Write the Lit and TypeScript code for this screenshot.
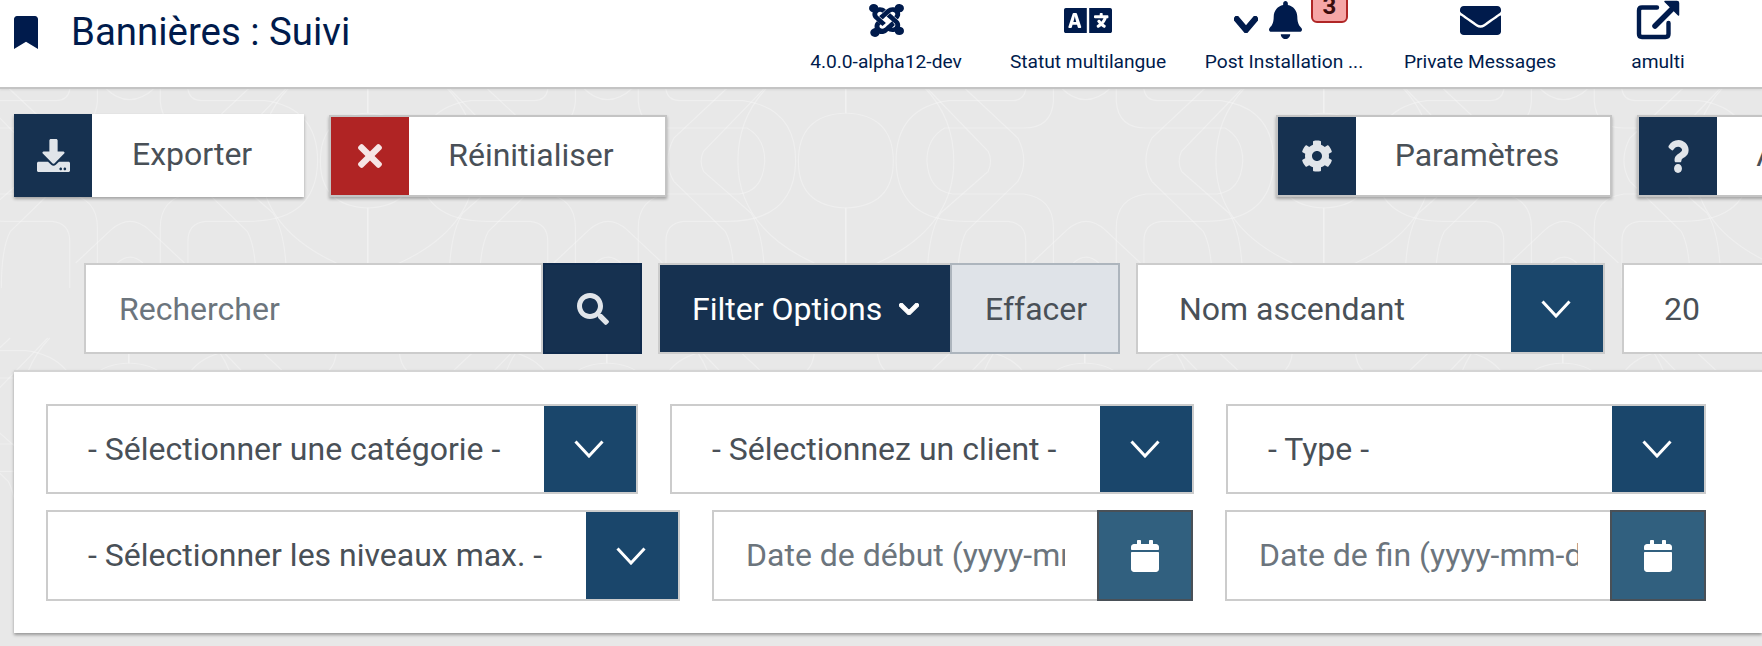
import { LitElement, html, css, svg } from "lit";
import { customElement } from "lit/decorators.js";

const P = {
  bookmark: "M0 512V48C0 21.49 21.49 0 48 0h288c26.51 0 48 21.49 48 48v464L192 400 0 512z",
  bell: "M224 512c35.32 0 63.97-28.65 63.97-64H160.03c0 35.35 28.65 64 63.97 64zm215.39-149.71c-19.32-20.76-55.47-51.99-55.47-154.29 0-77.7-54.48-139.9-127.94-155.16V32c0-17.67-14.32-32-31.98-32s-31.98 14.33-31.98 32v20.84C118.56 68.1 64.08 130.3 64.08 208c0 102.3-36.15 133.53-55.47 154.29-6 6.45-8.66 14.16-8.61 21.71.11 16.4 12.98 32 32.1 32h383.8c19.12 0 32-15.6 32.1-32 .05-7.55-2.61-15.27-8.61-21.71z",
  search: "M505 442.7L405.3 343c-4.5-4.5-10.6-7-17-7H372c27.6-35.3 44-79.7 44-128C416 93.1 322.9 0 208 0S0 93.1 0 208s93.1 208 208 208c48.3 0 92.7-16.4 128-44v16.3c0 6.4 2.5 12.5 7 17l99.7 99.7c9.4 9.4 24.6 9.4 33.9 0l28.3-28.3c9.4-9.4 9.4-24.6.1-34zM208 336c-70.7 0-128-57.2-128-128 0-70.7 57.2-128 128-128 70.7 0 128 57.2 128 128 0 70.7-57.2 128-128 128z",
  chevron: "M207.029 381.476L12.686 187.132c-9.373-9.373-9.373-24.569 0-33.941l22.667-22.667c9.357-9.357 24.522-9.375 33.901-.04L224 284.505l154.745-154.021c9.379-9.335 24.544-9.317 33.901.04l22.667 22.667c9.373 9.373 9.373 24.569 0 33.941L240.971 381.476c-9.373 9.372-24.569 9.372-33.942 0z",
  times: "M242.72 256l100.07-100.07c12.28-12.28 12.28-32.19 0-44.48l-22.24-22.24c-12.28-12.28-32.19-12.28-44.48 0L176 189.28 75.93 89.21c-12.28-12.28-32.19-12.28-44.48 0L9.21 111.45c-12.28 12.28-12.28 32.19 0 44.48L109.28 256 9.21 356.07c-12.28 12.28-12.28 32.19 0 44.48l22.24 22.24c12.28 12.28 32.2 12.28 44.48 0L176 322.72l100.07 100.07c12.28 12.28 32.2 12.28 44.48 0l22.24-22.24c12.28-12.28 12.28-32.19 0-44.48L242.72 256z",
  cog: "M487.4 315.7l-42.6-24.6c4.3-23.2 4.3-47 0-70.2l42.6-24.6c4.9-2.8 7.1-8.6 5.5-14-11.1-35.6-30-67.8-54.7-94.6-3.8-4.1-10-5.1-14.8-2.3L380.8 110c-17.9-15.4-38.5-27.3-60.8-35.1V25.8c0-5.6-3.9-10.5-9.4-11.7-36.7-8.2-74.3-7.8-109.2 0-5.5 1.2-9.4 6.1-9.4 11.7V75c-22.2 7.9-42.8 19.8-60.8 35.1L88.7 85.5c-4.9-2.8-11-1.9-14.8 2.3-24.7 26.7-43.6 58.9-54.7 94.6-1.7 5.4.6 11.2 5.5 14L67.3 221c-4.3 23.2-4.3 47 0 70.2l-42.6 24.6c-4.9 2.8-7.1 8.6-5.5 14 11.1 35.6 30 67.8 54.7 94.6 3.8 4.1 10 5.1 14.8 2.3l42.6-24.6c17.9 15.4 38.5 27.3 60.8 35.1v49.2c0 5.6 3.9 10.5 9.4 11.7 36.7 8.2 74.3 7.8 109.2 0 5.5-1.2 9.4-6.1 9.4-11.7v-49.2c22.2-7.9 42.8-19.8 60.8-35.1l42.6 24.6c4.9 2.8 11 1.9 14.8-2.3 24.7-26.7 43.6-58.9 54.7-94.6 1.5-5.5-.7-11.3-5.6-14.1zM256 336c-44.1 0-80-35.9-80-80s35.9-80 80-80 80 35.9 80 80-35.9 80-80 80z",
  question: "M202.021 0C122.202 0 70.503 32.703 29.914 91.026c-7.363 10.58-5.093 25.086 5.178 32.874l43.138 32.709c10.373 7.865 25.132 6.026 33.253-4.148 25.049-31.381 43.63-49.449 82.757-49.449 30.764 0 68.816 19.799 68.816 49.631 0 22.552-18.617 34.134-48.993 51.164-35.423 19.86-82.299 44.576-82.299 106.405V320c0 13.255 10.745 24 24 24h72.471c13.255 0 24-10.745 24-24v-5.773c0-42.86 125.268-44.645 125.268-160.627C377.504 66.256 286.902 0 202.021 0zM192 373.459c-38.196 0-69.271 31.075-69.271 69.271 0 38.195 31.075 69.27 69.271 69.27s69.271-31.075 69.271-69.271-31.075-69.27-69.271-69.27z",
  download: "M216 0h80c13.3 0 24 10.7 24 24v168h87.7c17.8 0 26.7 21.5 14.1 34.1L269.7 378.3c-7.5 7.5-19.8 7.5-27.3 0L90.1 226.1c-12.6-12.6-3.7-34.1 14.1-34.1H192V24c0-13.3 10.7-24 24-24zm296 376v112c0 13.3-10.7 24-24 24H24c-13.3 0-24-10.7-24-24V376c0-13.3 10.7-24 24-24h146.7l49 49c20.1 20.1 52.5 20.1 72.6 0l49-49H488c13.3 0 24 10.7 24 24zm-124 88c0-11-9-20-20-20s-20 9-20 20 9 20 20 20 20-9 20-20zm64 0c0-11-9-20-20-20s-20 9-20 20 9 20 20 20 20-9 20-20z",
  calendar: "M12 192h424c6.6 0 12 5.4 12 12v260c0 26.5-21.5 48-48 48H48c-26.5 0-48-21.5-48-48V204c0-6.6 5.4-12 12-12zm436-44v-36c0-26.5-21.5-48-48-48h-48V12c0-6.6-5.4-12-12-12h-40c-6.6 0-12 5.4-12 12v52H160V12c0-6.6-5.4-12-12-12h-40c-6.6 0-12 5.4-12 12v52H48C21.5 64 0 85.5 0 112v36c0 6.6 5.4 12 12 12h424c6.6 0 12-5.4 12-12z",
  envelope: "M502.3 190.8c3.9-3.1 9.7-.2 9.7 4.7V400c0 26.5-21.5 48-48 48H48c-26.5 0-48-21.5-48-48V195.6c0-5 5.7-7.8 9.7-4.7 22.4 17.4 52.1 39.5 154.1 113.6 21.1 15.4 56.7 47.8 92.2 47.6 35.7.3 72-32.8 92.3-47.6 102-74.1 131.6-96.3 154-113.7zM256 320c23.2.4 56.6-29.2 73.4-41.4 132.7-96.3 142.8-104.7 173.4-128.7 5.8-4.5 9.2-11.5 9.2-18.9v-19c0-26.5-21.5-48-48-48H48C21.5 64 0 85.5 0 112v19c0 7.4 3.4 14.3 9.2 18.9 30.6 23.9 40.7 32.4 173.4 128.7 16.8 12.2 50.2 41.8 73.4 41.4z",
  language: "M152.1 236.2c-3.5-12.1-7.8-33.2-7.8-33.2h-.5s-4.3 21.1-7.8 33.2l-11.1 37.5H163zM616 96H336v320h280c13.3 0 24-10.7 24-24V120c0-13.3-10.7-24-24-24zm-24 120c0 6.6-5.4 12-12 12h-11.4c-6.9 23.6-21.7 47.4-42.7 69.9 8.4 6.4 17.1 12.5 26.1 18 5.5 3.4 7.3 10.5 4.1 16.2l-7.9 13.9c-3.4 5.9-10.9 7.8-16.7 4.3-12.6-7.8-24.5-16.1-35.4-24.9-10.9 8.7-22.7 17.1-35.4 24.9-5.8 3.5-13.3 1.6-16.7-4.3l-7.9-13.9c-3.2-5.6-1.4-12.8 4.2-16.2 9.3-5.7 18-11.7 26.1-18-7.9-8.4-14.9-17-21-25.7-4-5.7-2.2-13.6 3.7-17.1l6.5-3.9 7.3-4.3c5.6-3.3 12.6-1.7 16.4 3.4 5 7 10.8 14 17.4 20.9 13.5-14.2 23.8-28.9 30-43.2H412c-6.6 0-12-5.4-12-12v-16c0-6.6 5.4-12 12-12h64v-16c0-6.6 5.4-12 12-12h16c6.6 0 12 5.4 12 12v16h64c6.6 0 12 5.4 12 12zM0 120v272c0 13.3 10.7 24 24 24h280V96H24c-13.3 0-24 10.7-24 24zm58.9 216.1L116.4 167c1.7-4.9 6.2-8.1 11.4-8.1h32.5c5.1 0 9.7 3.3 11.4 8.1l57.5 169.1c2.6 7.8-3.1 15.9-11.4 15.9h-22.9a12 12 0 0 1-11.5-8.6l-9.4-31.9h-60.2l-9.1 31.8c-1.5 5.1-6.2 8.7-11.5 8.7H70.3c-8.2 0-14-8.1-11.4-15.9z",
  joomla: "M.6 92.1C.6 58.8 27.4 32 60.4 32c30 0 54.5 21.9 59.2 50.2 32.6-7.6 67.1.6 96.5 30l-44.3 44.3c-20.5-20.5-42.6-16.3-55.4-3.5-14.3 14.3-14.3 37.9 0 52.2l99.5 99.5-44 44.3c-87.7-87.2-49.7-49.7-99.8-99.7-26.8-26.5-35-64.8-24.8-98.9C20.4 144.6.6 120.7.6 92.1zm129.5 116.4l44.3 44.3c10-10 89.7-89.7 99.7-99.8 14.3-14.3 37.6-14.3 51.9 0 12.8 12.8 17 35-3.5 55.4l44 44.3c31.2-31.2 38.5-67.6 28.9-101.2 29.2-4.1 51.9-29.2 51.9-59.5 0-33.2-26.8-60.1-59.8-60.1-30.3 0-55.4 22.5-59.5 51.6-33.8-9.9-71.7-1.5-98.3 25.1-18.3 19.1-71.1 71.5-99.6 99.9zm266.3 152.2c8.2-32.7-.9-68.5-26.3-93.9-11.8-12.2 5 4.7-99.5-99.7l-44.3 44.3 99.7 99.7c14.3 14.3 14.3 37.6 0 51.9-12.8 12.8-35 17-55.4-3.5l-44 44.3c27.6 30.2 68 38.8 102.7 28 5.5 27.4 29.7 48.1 58.9 48.1 33 0 59.8-26.8 59.8-60.1 0-30.2-22.5-55-51.6-58.9zM296 279.4c-10.1 10.1-89.8 89.7-99.7 99.8-14.3 14.3-37.6 14.3-51.9 0-13.4-13.4-16.4-35.8 3.5-55.4L103.5 279c-28.6 28.1-37.8 65.1-30.1 100.1C41.2 387.4 16 414.2 16 447c0 33.2 26.8 60.1 59.8 60.1 28.6 0 52.5-19.7 58.4-46.3 33.8 9.9 70.5 1.2 97.6-25.1 33.3-33.3 52.3-52.8 99.7-99.7L296 279.4z",
};

function ico(path: string, vb: string, cls: string) {
  return html`<svg class="ic ${cls}" viewBox=${vb} preserveAspectRatio="none" aria-hidden="true"><path d=${path}></path></svg>`;
}

/* Background line-art: half of a mirrored tile, in a coordinate space 2.529x / 3x of the page. */
const halfTile = [
  "M670 0 Q743 90 743 220 Q743 420 550 525 L480 560",
  "M675 0 L830 190 Q842 220 830 250 L710 375 Q675 440 675 600",
  "M770 0 L905 150 Q935 220 905 280 L775 430 Q752 480 752 600",
  "M995 0 L995 40 Q990 120 920 120 L720 120 Q675 150 675 220 Q680 310 740 318 L920 318 Q995 330 995 420 L995 600",
  "M925 0 L925 5 Q920 38 890 38 L730 38 Q597 60 597 220 Q600 400 770 400 L880 400 Q925 405 925 460 L925 600",
  "M470 0 L470 75 Q590 80 590 220 Q590 355 470 360 L470 600",
];
const centre = [
  "M1015 0 Q1075 70 1140 0",
  "M940 525 L1030 425 Q1078 375 1125 425 L1215 525",
  "M1045 525 Q1078 490 1110 525",
];
function tile(dx: number, dy: number) {
  const sx = 1 / 2.529;
  const sy = 1 / 3;
  const t = `translate(${660 + dx} ${88 + dy}) scale(${sx} ${sy})`;
  const parts = [...halfTile, ...centre];
  return svg`
    <g transform=${t}>${parts.map((d) => svg`<path d=${d}></path>`)}</g>
    <g transform=${`${t} translate(940 0) scale(-1 1)`}>${halfTile.map((d) => svg`<path d=${d}></path>`)}</g>
  `;
}

@customElement("app-root")
export class AppRoot extends LitElement {
  static styles = css`
    :host {
      display: block;
      position: relative;
      width: 1762px;
      height: 646px;
      overflow: hidden;
      background: #e8e8e8;
      font-family: Roboto, "Liberation Sans", sans-serif;
      color: #495057;
    }
    * { box-sizing: border-box; }
    .bg {
      position: absolute;
      inset: 0;
      width: 1762px;
      height: 646px;
    }
    .bg path {
      fill: none;
      stroke: rgba(255, 255, 255, 0.3);
      stroke-width: 1.2px;
      vector-effect: non-scaling-stroke;
    }
    .content { position: relative; display: flex; flex-direction: column; }
    .ic { display: block; fill: currentColor; flex: none; }

    header {
      height: 89px;
      background: #fff;
      border-bottom: 2px solid #c4c4c4;
      box-shadow: 0 1px 2px rgba(0, 0, 0, 0.08);
      display: flex;
      justify-content: space-between;
      padding: 0 28px 0 14px;
      color: #001b4c;
    }
    .brand { display: flex; align-items: flex-start; }
    .i-bookmark { width: 24px; height: 33px; margin-top: 16px; }
    h1 {
      margin: 0 0 0 33px;
      font-size: 38.4px;
      line-height: 42px;
      font-weight: 400;
      padding-top: 11px;
    }
    .links {
      display: grid;
      grid-template-columns: 200px 204px 188px 204px 152px;
    }
    .link { display: flex; flex-direction: column; align-items: center; }
    .link-icon { height: 40px; display: flex; align-items: center; position: relative; }
    .link-label { margin-top: 11px; font-size: 19.2px; line-height: 22px; white-space: nowrap; }
    .i-joomla { width: 35px; height: 33px; }
    .i-lang { width: 48px; height: 25px; }
    .i-bell { width: 33px; height: 38px; }
    .i-chev-s { width: 24px; height: 17px; margin: 9px 11px 0 0; stroke: currentColor; stroke-width: 25px; }
    .i-env { width: 41px; height: 29px; }
    .bell-group { padding-right: 32px; }
    .badge {
      position: absolute;
      left: 77px;
      top: -12px;
      width: 37px;
      height: 35px;
      background: #f5a6a6;
      border: 2px solid #b02626;
      border-radius: 6px;
      color: #3a0d0d;
      font-size: 24px;
      font-weight: 700;
      line-height: 1;
      display: flex;
      align-items: flex-end;
      justify-content: center;
      padding-bottom: 3px;
    }
    .edit { width: 44px; height: 40px; fill: none; stroke: currentColor; display: block; }

    .toolbar { display: flex; margin-top: 25px; padding-left: 14px; gap: 25px; height: 83px; }
    .btn {
      flex: none;
      display: flex;
      background: #fff;
      border: 2px solid #c4c4c4;
      box-shadow: 0 2px 3px rgba(0, 0, 0, 0.3);
      height: 82px;
      margin-top: 1px;
      font-size: 32px;
      align-items: stretch;
      white-space: nowrap;
    }
    .btn.plain { border: 0; height: 83px; margin-top: 0; }
    .btn .box {
      width: 78px;
      background: #163150;
      color: #e1e5ea;
      display: flex;
      align-items: center;
      justify-content: center;
    }
    .btn .box.danger { background: #b02424; color: #f6e5e5; }
    .btn .txt { padding: 0 51px 3px 39px; display: flex; align-items: center; }
    .btn.plain .txt { padding: 0 52px 4px 40px; }
    .btn.settings { margin-left: 584px; }
    .i-dl { width: 33px; height: 33px; }
    .i-x { width: 24px; height: 24px; }
    .i-cog { width: 32px; height: 32px; }
    .i-q { width: 22px; height: 33px; }

    .filters { display: flex; margin-top: 66px; padding-left: 84px; gap: 16px; height: 91px; }
    .group { flex: none; display: flex; font-size: 32px; height: 91px; white-space: nowrap; }
    .search { width: 459px; background: #fff; border: 2px solid #ccc; color: #6c757d; padding-left: 33px; display: flex; align-items: center; }
    .search-btn {
      width: 99px;
      background: #163150;
      border: 2px solid #0f2a4c;
      color: #e1e5ea;
      display: flex;
      align-items: center;
      justify-content: center;
    }
    .i-s { width: 32px; height: 32px; }
    .filter-btn {
      width: 292px;
      background: #163150;
      color: #fff;
      border: 2px solid #ccc;
      border-right: 0;
      font-weight: 400;
      padding-left: 32px;
      display: flex;
      align-items: center;
    }
    .i-chev-w { width: 20px; height: 12px; margin-left: 17px; stroke: currentColor; stroke-width: 25px; }
    .clear {
      width: 170px;
      background: #dfe3e8;
      border: 2px solid #adb5bd;
      display: flex;
      align-items: center;
      padding-left: 33px;
    }
    .select {
      flex: none;
      display: flex;
      justify-content: space-between;
      background: #fff;
      border: 2px solid #ccc;
      font-size: 32px;
      height: 90px;
      white-space: nowrap;
    }
    .select .val { padding-left: 40px; display: flex; align-items: center; }
    .select .arrow {
      width: 92px;
      background: #1a466b;
      display: flex;
      align-items: center;
      justify-content: center;
    }
    .arrow svg { width: 30px; height: 18px; margin-right: 2px; fill: none; stroke: #fff; stroke-width: 3px; display: block; }
    .sort { width: 469px; height: 91px; }
    .sort .val { padding-left: 41px; }
    .limit { width: 300px; height: 91px; margin-left: 1px; }

    .panel {
      margin: 16px 0 0 14px;
      height: 263px;
      background: #fff;
      border-top: 2px solid #d4d4d4;
      box-shadow: 0 2px 3px rgba(0, 0, 0, 0.35);
      padding: 32px 0 0 32px;
      display: flex;
      flex-direction: column;
      gap: 16px;
    }
    .row { display: flex; gap: 32px; }
    .w592 { width: 592px; }
    .w524 { width: 524px; }
    .w480 { width: 480px; }
    .w634 { width: 634px; height: 91px; }
    .w634 .val { padding-bottom: 2px; }
    .date {
      flex: none;
      display: flex;
      height: 91px;
      width: 481px;
      font-size: 32px;
      white-space: nowrap;
    }
    .date .input {
      flex: 1;
      min-width: 0;
      border: 2px solid #ccc;
      border-right: 0;
      color: #6c757d;
      display: flex;
      align-items: center;
      padding: 0 0 2px 32px;
    }
    .date .clip { display: block; width: 319px; overflow: hidden; }
    .date .cal {
      width: 96px;
      background: #31607f;
      border: 2px solid #495057;
      color: #fff;
      display: flex;
      align-items: center;
      justify-content: center;
    }
    .i-cal { width: 28px; height: 32px; }
  `;

  private arrow() {
    return html`<span class="arrow"><svg viewBox="0 0 30 18"><path d="M1.5 1.5 L15 16 L28.5 1.5"></path></svg></span>`;
  }

  private sel(label: string, cls: string) {
    return html`<div class="select ${cls}"><span class="val">${label}</span>${this.arrow()}</div>`;
  }

  private date(label: string) {
    return html`<div class="date">
      <div class="input"><span class="clip">${label}</span></div>
      <div class="cal">${ico(P.calendar, "0 0 448 512", "i-cal")}</div>
    </div>`;
  }

  render() {
    return html`
      <svg class="bg" viewBox="0 0 1762 646" aria-hidden="true">
        ${[-956, -478, 0, 478, 956].map((dx) => tile(dx, 0))}
        ${[-717, -239, 239, 717, 1195].map((dx) => tile(dx, 250))}
      </svg>
      <div class="content">
        <header>
          <div class="brand">
            ${ico(P.bookmark, "0 0 384 512", "i-bookmark")}
            <h1>Bannières : Suivi</h1>
          </div>
          <nav class="links">
            <div class="link">
              <div class="link-icon">${ico(P.joomla, "0 32 448 476", "i-joomla")}</div>
              <div class="link-label">4.0.0-alpha12-dev</div>
            </div>
            <div class="link">
              <div class="link-icon">${ico(P.language, "0 96 640 320", "i-lang")}</div>
              <div class="link-label">Statut multilangue</div>
            </div>
            <div class="link">
              <div class="link-icon bell-group">
                ${ico(P.chevron, "0 120 448 270", "i-chev-s")}
                ${ico(P.bell, "0 0 448 512", "i-bell")}
                <span class="badge">3</span>
              </div>
              <div class="link-label">Post Installation ...</div>
            </div>
            <div class="link">
              <div class="link-icon">${ico(P.envelope, "0 64 512 384", "i-env")}</div>
              <div class="link-label">Private Messages</div>
            </div>
            <div class="link">
              <div class="link-icon">
                <svg class="edit" viewBox="0 0 44 40" aria-hidden="true">
                  <path d="M21 7.5 H6 Q3 7.5 3 10.5 V34 Q3 37 6 37 H29.5 Q32.5 37 32.5 34 V23" stroke-width="4.4" stroke-linecap="round"></path>
                  <path d="M19 26 L37 8" stroke-width="5.5" stroke-linecap="round"></path>
                  <path d="M29 1.5 H41 Q42.5 1.5 42.5 3 V15 Z" fill="currentColor" stroke-width="1.5" stroke-linejoin="round"></path>
                </svg>
              </div>
              <div class="link-label">amulti</div>
            </div>
          </nav>
        </header>

        <div class="toolbar">
          <div class="btn plain">
            <span class="box">${ico(P.download, "0 0 512 512", "i-dl")}</span>
            <span class="txt">Exporter</span>
          </div>
          <div class="btn">
            <span class="box danger">${ico(P.times, "0 80 352 352", "i-x")}</span>
            <span class="txt">Réinitialiser</span>
          </div>
          <div class="btn settings">
            <span class="box">${ico(P.cog, "0 0 512 512", "i-cog")}</span>
            <span class="txt">Paramètres</span>
          </div>
          <div class="btn">
            <span class="box">${ico(P.question, "0 0 384 512", "i-q")}</span>
            <span class="txt">Aide</span>
          </div>
        </div>

        <div class="filters">
          <div class="group">
            <div class="search">Rechercher</div>
            <div class="search-btn">${ico(P.search, "0 0 512 512", "i-s")}</div>
          </div>
          <div class="group">
            <div class="filter-btn">Filter Options${ico(P.chevron, "0 120 448 270", "i-chev-w")}</div>
            <div class="clear">Effacer</div>
          </div>
          ${this.sel("Nom ascendant", "sort")}
          ${this.sel("20", "limit")}
        </div>

        <section class="panel">
          <div class="row">
            ${this.sel("- Sélectionner une catégorie -", "w592")}
            ${this.sel("- Sélectionnez un client -", "w524")}
            ${this.sel("- Type -", "w480")}
          </div>
          <div class="row">
            ${this.sel("- Sélectionner les niveaux max. -", "w634")}
            ${this.date("Date de début (yyyy-mm-dd)")}
            ${this.date("Date de fin (yyyy-mm-dd)")}
          </div>
        </section>
      </div>
    `;
  }
}
